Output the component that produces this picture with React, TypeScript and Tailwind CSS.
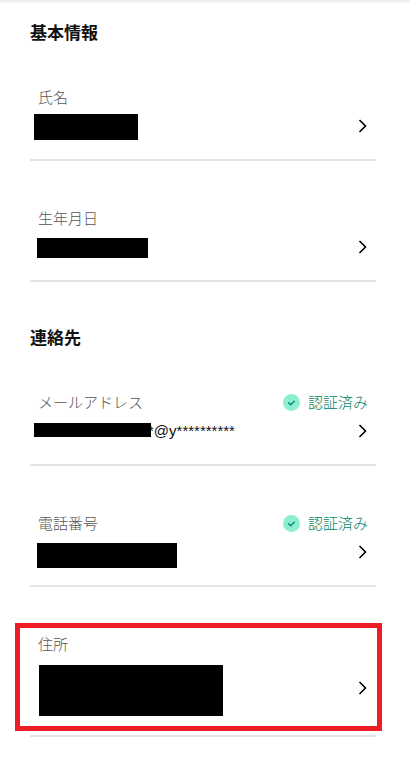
import type { ReactNode } from 'react'

type RowProps = {
  label: string
  verified?: boolean
  highlighted?: boolean
  tall?: boolean
  children: ReactNode
}

function VerifiedBadge() {
  return (
    <span className="flex items-center gap-2 text-[#00836a]">
      <svg width="17" height="17" viewBox="0 0 17 17" fill="none" aria-hidden="true">
        <circle cx="8.5" cy="8.5" r="8.5" fill="#8eefd0" />
        <path d="M5.2 8.4l2.5 2.3 4-3.9" stroke="#0b8f75" strokeWidth="1.5" />
      </svg>
      認証済み
    </span>
  )
}

function Chevron() {
  return (
    <svg width="10" height="14" viewBox="0 0 10 14" fill="none" aria-hidden="true">
      <path d="M1.5 1l6 6-6 6" stroke="#000" strokeWidth="1.6" />
    </svg>
  )
}

function Row({ label, verified, highlighted, tall, children }: RowProps) {
  return (
    <li className="relative">
      <button type="button" className="block w-full border-b-2 border-[#e4e4e4] pb-[17px] text-left">
        <span className="flex h-6 items-start justify-between px-2 text-[15px] leading-[22px] font-light text-[#555]">
          {label}
          {verified && <VerifiedBadge />}
        </span>
        <span className={tall ? 'flex h-[61px] justify-between pr-2' : 'flex h-8 justify-between pr-2'}>
          <span className="flex items-start">{children}</span>
          <span className="flex items-center">
            <Chevron />
          </span>
        </span>
      </button>
      {highlighted && (
        <span className="pointer-events-none absolute -top-[10px] bottom-[6px] -left-[15px] -right-[6px] border-[5px] border-[#ee1c25]" />
      )}
    </li>
  )
}

function Section({ title, children }: { title: string; children: ReactNode }) {
  return (
    <section>
      <h2 className="mb-[42px] text-[17px] font-bold leading-6 text-[#111]">{title}</h2>
      <ul className="flex flex-col gap-[46px]">{children}</ul>
    </section>
  )
}

export default function App() {
  return (
    <div className="bg-white font-['Noto_Sans_CJK_JP',sans-serif]">
      <div className="h-1 bg-linear-to-b from-[#ebebeb] to-white" />
      <main className="flex flex-col gap-[43px] pt-4 pr-[34px] pb-[26px] pl-[30px]">
        <Section title="基本情報">
          <Row label="氏名">
            <span className="mt-1 ml-1 h-[26px] w-[104px] bg-black" />
          </Row>
          <Row label="生年月日">
            <span className="mt-[7px] ml-[7px] h-5 w-[111px] bg-black" />
          </Row>
        </Section>

        <Section title="連絡先">
          <Row label="メールアドレス" verified>
            <span className="relative z-10 mt-2 ml-1 h-[14px] w-[117px] bg-black" />
            <span className="-ml-[3px] font-['Liberation_Sans',sans-serif] text-[15px] leading-8 text-[#111]">
              *@y**********
            </span>
          </Row>
          <Row label="電話番号" verified>
            <span className="mt-[7px] ml-[7px] h-[25px] w-[140px] bg-black" />
          </Row>
          <Row label="住所" highlighted tall>
            <span className="mt-2 ml-[9px] h-[51px] w-[184px] bg-black" />
          </Row>
        </Section>
      </main>
    </div>
  )
}
